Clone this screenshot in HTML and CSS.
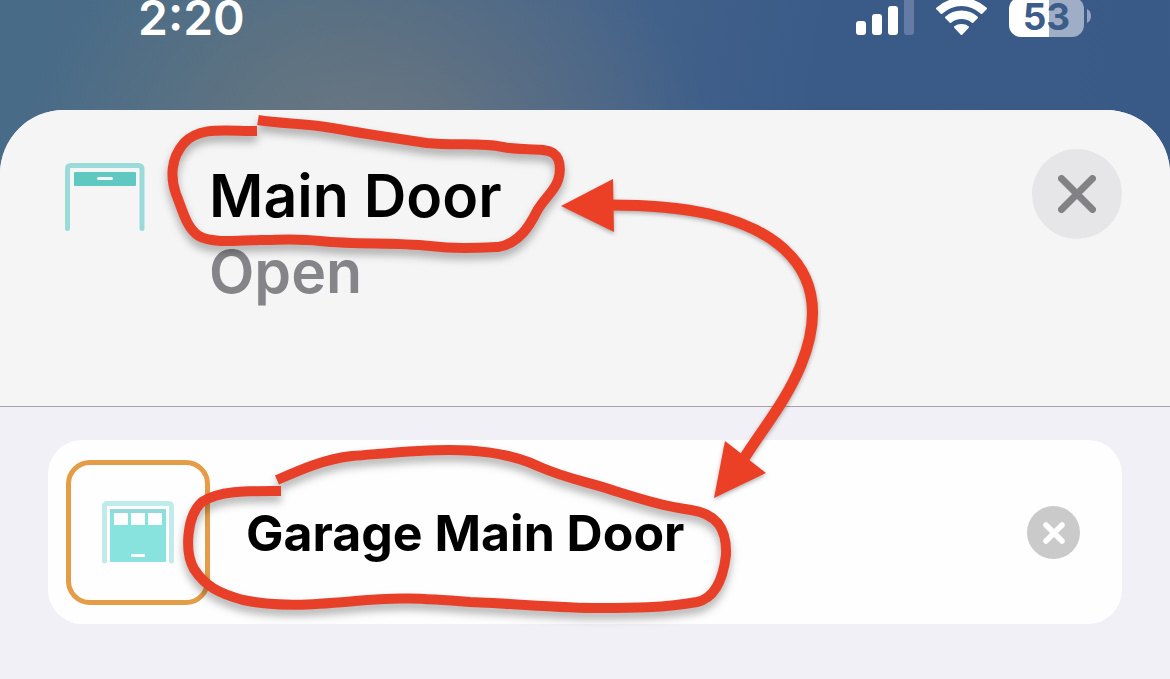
FILE: index.html
```html
<!DOCTYPE html>
<html lang="en">
<head>
<meta charset="utf-8">
<meta name="viewport" content="width=device-width, initial-scale=1">
<title>Main Door</title>
<link rel="stylesheet" href="styles.css">
</head>
<body>
<div class="screen">
  <div class="status-bar">
    <span class="time">2:20</span>
    <div class="status-icons">
      <svg class="signal" width="60" height="36" viewBox="0 0 60 36" role="img" aria-label="Signal">
        <rect x="1" y="21" width="10" height="14" rx="3" fill="#fff"/>
        <rect x="17" y="14" width="10" height="21" rx="3" fill="#fff"/>
        <rect x="33" y="6" width="10" height="29" rx="3" fill="#fff"/>
        <rect x="49" y="-4" width="10" height="39" rx="3" fill="#647ca5"/>
      </svg>
      <svg class="wifi" width="54" height="36" viewBox="0 0 54 36" role="img" aria-label="Wi-Fi">
        <g fill="#fff" stroke="#fff" stroke-width="2" stroke-linejoin="round">
          <path d="M2 8.500Q12.500-1 26.500-1T51 8.500L46.500 13Q37.500 5 26.500 5T6.500 13Z"/>
          <path d="M11 17.500Q17.500 11.500 26.500 11.500T42 17.500L37.500 22Q33 18 26.500 18T15.500 22Z"/>
          <path d="M20 27Q22.500 25 26.500 25T33 27L26.500 34Z"/>
        </g>
      </svg>
      <div class="battery"><span class="battery-level">53</span><svg class="battery-cap" width="5" height="14" viewBox="0 0 5 14" aria-hidden="true"><path d="M0 0Q4 2 4 7T0 14Z" fill="#93a4c0"/></svg></div>
    </div>
  </div>

  <main class="sheet">
    <header class="sheet-header">
      <svg class="door-icon" width="80" height="70" viewBox="0 0 80 70" aria-hidden="true">
        <path d="M2.500 65.500V6Q2.500 2.500 6 2.500H73.500Q77 2.500 77 6V65.500" fill="none" stroke="#9adbd9" stroke-width="5" stroke-linecap="round"/>
        <rect x="9" y="9" width="62" height="14" rx="1" fill="#5ec8c1"/>
        <rect x="32" y="14" width="16" height="3" rx="1.500" fill="#f5f5f6"/>
      </svg>
      <div class="titles">
        <h1 class="title">Main Door</h1>
        <p class="state">Open</p>
      </div>
      <button class="close" type="button" aria-label="Close">
        <svg width="38" height="38" viewBox="0 0 38 38" aria-hidden="true"><path d="M3.500 3.500L34.500 34.500M34.500 3.500L3.500 34.500" stroke="#828286" stroke-width="7" stroke-linecap="round"/></svg>
      </button>
    </header>
    <section class="content">
      <div class="name-card">
        <button class="icon-picker" type="button" aria-label="Choose icon">
          <svg width="72" height="63" viewBox="0 0 72 63" aria-hidden="true">
            <path d="M2.500 60V5.500Q2.500 2.500 5.500 2.500H66.500Q69.500 2.500 69.500 5.500V60" fill="none" stroke="#c1ebea" stroke-width="5" stroke-linecap="round"/>
            <rect x="8" y="8" width="56" height="53" rx="1" fill="#88e3df"/>
            <path d="M8 8H64V12H8Z" fill="#94d9d9"/>
            <path d="M12 12H26V24H12ZM29 12H43V24H29ZM46 12H60V24H46Z" fill="#fff"/>
            <rect x="29" y="53" width="14" height="3" rx="1" fill="#fff"/>
          </svg>
        </button>
        <input class="name-input" type="text" aria-label="Accessory name" value="Garage Main Door">
        <button class="clear" type="button" aria-label="Clear text">
          <svg width="22" height="22" viewBox="0 0 22 22" aria-hidden="true"><path d="M3 3L19 19M19 3L3 19" stroke="#fff" stroke-width="5.500" stroke-linecap="round"/></svg>
        </button>
      </div>
    </section>
  </main>

  <svg class="markup" width="1170" height="679" viewBox="0 0 1170 679" aria-hidden="true">
    <g class="loop">
      <path d="M258 120C283 124 305 123 332 128C365 134 400 139 427 143C455 146 480 142 503 147C520 151 545 147 553 153C563 160 561 178 554 188C548 197 542 202 537 211C530 225 519 244 498 247C475 248 455 249 430 246C390 242 360 245 320 241C295 238 280 240 260 240C235 241 210 243 199 236C186 228 182 208 176 194C170 177 171 158 184 143C200 126 225 131 257 131"/>
      <path d="M277 480C302 469 325 459 352 456C380 454 415 450 450 450C485 450 515 455 540 467C570 480 590 482 615 491C650 502 665 506 691 510C718 514 727 530 726 555C723 580 715 598 697 602C665 608 630 608 600 608C560 608 520 604 470 602C420 598 395 597 355 601C320 604 280 608 243 600C218 593 205 586 194 569C184 551 187 515 202 502C220 490 250 491 281 491"/>
    </g>
    <g class="arrow">
      <path class="arrow-line" d="M610 205C680 205 745 214 784 249C819 281 818 323 801 365C786 401 764 427 743 460"/>
      <path class="arrow-head" d="M561 206L613 179L614 232Z"/>
      <path class="arrow-head" d="M714 498L725 441L766 473Z"/>
    </g>
  </svg>
</div>
</body>
</html>
```
FILE: styles.css
```css
* {
  box-sizing: border-box;
}

body,
h1,
p {
  margin: 0;
}

body {
  font-family: Inter, "Liberation Sans", sans-serif;
  background: #f1f0f7;
}

button,
input {
  font: inherit;
  border: 0;
  padding: 0;
}

.screen {
  position: relative;
  display: flex;
  flex-direction: column;
  min-height: 100vh;
  overflow: hidden;
  background:
    radial-gradient(340px 260px at 370px 150px, rgba(132, 128, 124, 0.6), rgba(122, 124, 120, 0.35) 50%, rgba(110, 120, 120, 0)),
    linear-gradient(100deg, #486b88 0, #4b6c87 300px, #45648b 560px, #3a5b88 820px, #395a87 100%);
}

.status-bar {
  display: flex;
  justify-content: space-between;
  align-items: flex-start;
  height: 110px;
  padding: 0 86px 0 138px;
}

.time {
  color: #fff;
  font-size: 48px;
  font-weight: 600;
  line-height: 36px;
}

.status-icons {
  display: flex;
  align-items: flex-start;
  gap: 20px;
}

.battery {
  display: flex;
  align-items: center;
  position: relative;
  width: 75px;
  height: 40px;
  margin-top: -3px;
  border-radius: 12px;
  background: linear-gradient(90deg, #fff 40px, #9fadc6 40px);
}

.battery-level {
  flex: 1;
  color: #3c5c89;
  font-size: 37px;
  font-weight: 700;
  line-height: 38px;
  text-align: center;
}

.battery-cap {
  position: absolute;
  left: 78px;
  top: 12px;
}

.sheet {
  flex: 1;
  display: flex;
  flex-direction: column;
  border-radius: 64px 64px 0 0;
  background: #f1f0f7;
  overflow: hidden;
}

.sheet-header {
  display: flex;
  align-items: flex-start;
  min-height: 297px;
  padding: 39px 48px 0 65px;
  background: #f5f5f6;
  border-bottom: 1px solid #a5a5a9;
}

.door-icon {
  margin-top: 14px;
}

.titles {
  flex: 1;
  margin: 9px 0 0 64px;
}

.title,
.state {
  font-size: 59px;
  line-height: 76px;
  font-weight: 600;
}

.title {
  color: #000;
}

.state {
  color: #858589;
}

.close,
.clear {
  display: grid;
  place-items: center;
  flex: none;
  border-radius: 50%;
}

.close {
  width: 90px;
  height: 90px;
  background: #e6e6e8;
}

.content {
  padding: 33px 48px 55px;
}

.name-card {
  display: flex;
  align-items: center;
  padding: 20px 42px 19px 18px;
  border-radius: 34px;
  background: #fefefe;
}

.icon-picker {
  display: grid;
  place-items: center;
  flex: none;
  width: 144px;
  height: 145px;
  border: 5px solid #e49c47;
  border-radius: 24px;
  background: transparent;
}

.name-input {
  flex: 1;
  min-width: 0;
  height: 76px;
  margin-left: 36px;
  color: #000;
  background: transparent;
  font-size: 50px;
  font-weight: 700;
  outline: 0;
}

.clear {
  width: 53px;
  height: 53px;
  background: #cacaca;
}

.markup {
  position: absolute;
  left: 0;
  top: 0;
  pointer-events: none;
}

.loop {
  fill: none;
  stroke: #e84028;
  stroke-width: 10px;
  stroke-linejoin: round;
  filter: drop-shadow(0 6px 4px rgba(0, 0, 0, 0.3));
}

.arrow {
  filter: drop-shadow(0 2px 2px rgba(0, 0, 0, 0.3));
}

.arrow-line {
  fill: none;
  stroke: #ec4026;
  stroke-width: 11px;
}

.arrow-head {
  fill: #ec4026;
}
```
